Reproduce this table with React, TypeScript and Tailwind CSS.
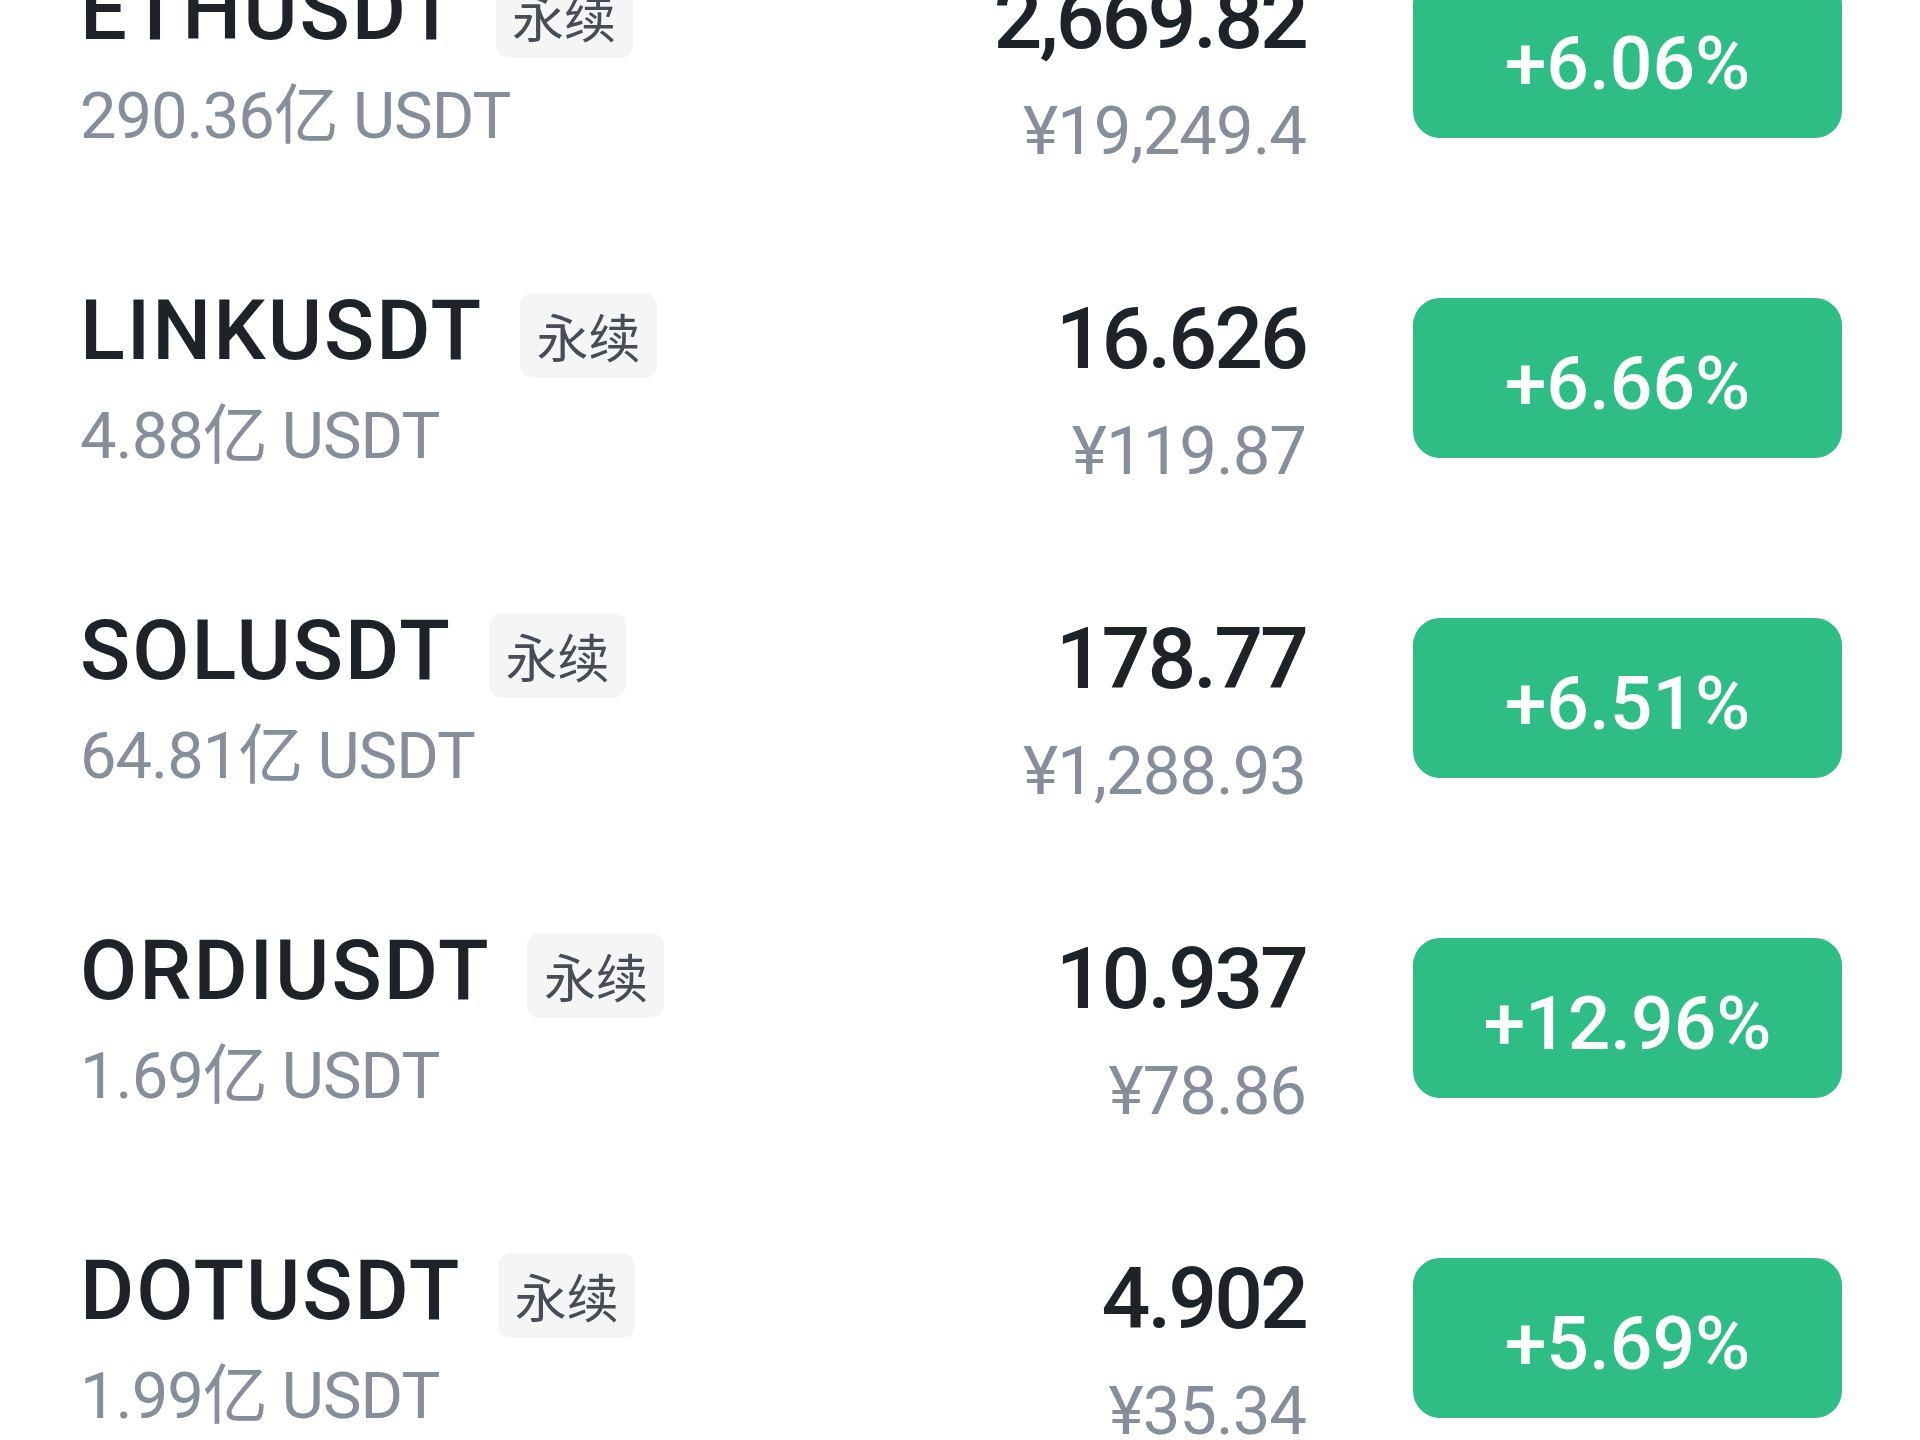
import React from "react";

type Row = {
  symbol: string;
  volume: string;
  price: string;
  cny: string;
  change: string;
};

const rows: Row[] = [
  { symbol: "ETHUSDT", volume: "290.36亿 USDT", price: "2,669.82", cny: "¥19,249.4", change: "+6.06%" },
  { symbol: "LINKUSDT", volume: "4.88亿 USDT", price: "16.626", cny: "¥119.87", change: "+6.66%" },
  { symbol: "SOLUSDT", volume: "64.81亿 USDT", price: "178.77", cny: "¥1,288.93", change: "+6.51%" },
  { symbol: "ORDIUSDT", volume: "1.69亿 USDT", price: "10.937", cny: "¥78.86", change: "+12.96%" },
  { symbol: "DOTUSDT", volume: "1.99亿 USDT", price: "4.902", cny: "¥35.34", change: "+5.69%" },
];

const FONT = "font-['Roboto','Noto_Sans_CJK_SC',sans-serif]";

function MarketRow({ r }: { r: Row }) {
  return (
    <div className="flex h-[320px] shrink-0 items-start pl-[80px] pr-[78px]">
      <div className="flex flex-1 flex-col pt-[9px]">
        <div className="flex items-start">
          <span className="text-[83px] leading-none font-medium tracking-[2px] text-[#1e2329]">
            {r.symbol}
          </span>
          <span className="ml-[37px] mt-[4px] flex h-[85px] w-[137px] items-center justify-center rounded-[13px] bg-[#f5f5f5] font-['Noto_Sans_CJK_SC',sans-serif] text-[52px] leading-none text-[#474d57]">
            永续
          </span>
        </div>
        <div className="mt-[26px] text-[65px] leading-none tracking-[-1px] text-[#878e9b]">
          {r.volume}
        </div>
      </div>
      <div className="mr-[107px] flex flex-col items-end pt-[16px]">
        <div className="text-[86px] leading-none font-medium tracking-[-3px] text-[#1e2329]">
          {r.price}
        </div>
        <div className="mt-[36px] text-[67px] leading-none tracking-[-1px] text-[#878e9b]">
          {r.cny}
        </div>
      </div>
      <div className="mt-[18px] flex h-[160px] w-[429px] items-center justify-center rounded-[27px] bg-[#2ebd85] pt-[10px]">
        <span className="text-[75px] leading-none font-medium text-white">{r.change}</span>
      </div>
    </div>
  );
}

export default function App() {
  return (
    <div className={`h-[1440px] w-[1920px] overflow-hidden bg-white ${FONT}`}>
      <div className="-mt-[40px] flex flex-col">
        {rows.map((r) => (
          <MarketRow key={r.symbol} r={r} />
        ))}
      </div>
    </div>
  );
}
